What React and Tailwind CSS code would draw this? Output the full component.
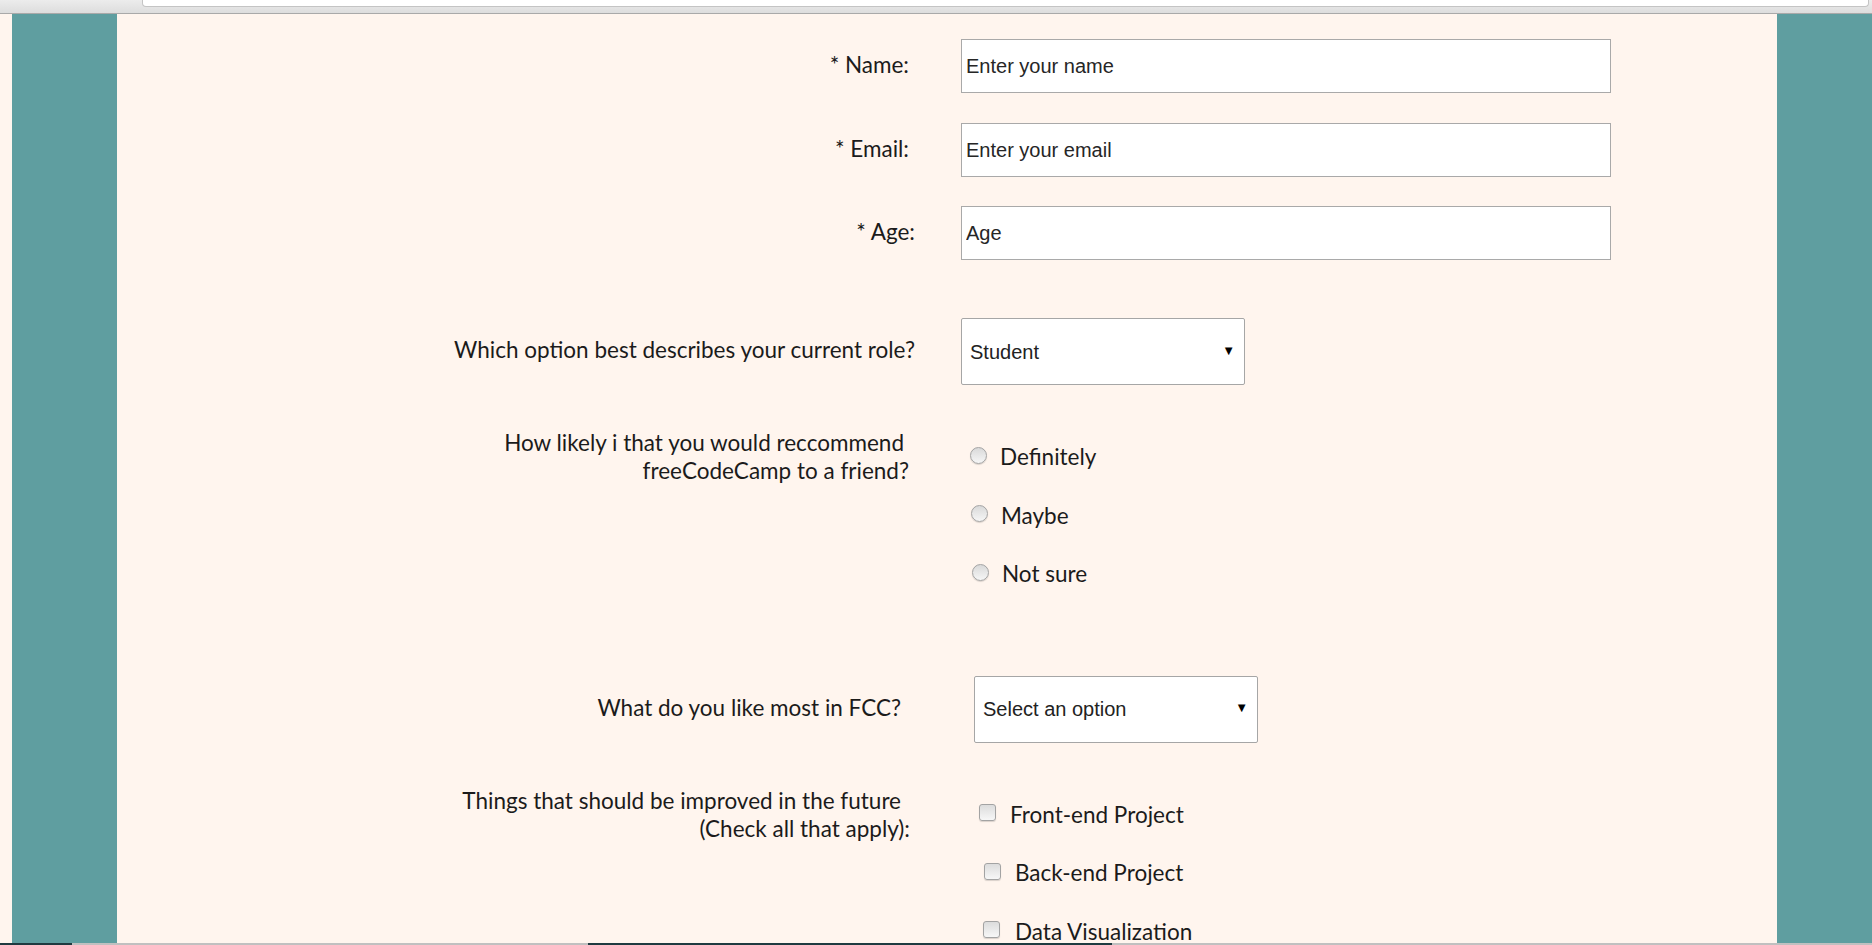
import React from 'react';

const labelFont = { fontFamily: 'Lato, "Open Sans", sans-serif' };

function TextRow({ label, placeholder, labelW = 'w-[792px]', gap = 'ml-[52px]', className = '' }) {
  return (
    <div className={`flex items-center ${className}`}>
      <div className={`${labelW} shrink-0 text-right text-[22.5px] leading-[28px] text-[#1b1b1b] -mt-[2px]`} style={labelFont}>
        {label}
      </div>
      <input
        readOnly
        placeholder={placeholder}
        className={`${gap} h-[54px] w-[650px] border border-[#a9a9a9] bg-white px-[4px] text-[20px] text-[#222] outline-none placeholder:text-[#262626] font-['Liberation_Sans',Arial,sans-serif]`}
      />
    </div>
  );
}

function FakeSelect({ value }) {
  return (
    <div className="relative h-[67px] w-[284px] rounded-[2px] border border-[#a6a6a6] bg-white">
      <div className="flex h-full items-center pl-[8px] text-[20px] text-[#222] font-['Liberation_Sans',Arial,sans-serif]">
        {value}
      </div>
      <span className="absolute right-[9px] top-1/2 -translate-y-[60%] text-[13px] leading-none text-black">▼</span>
    </div>
  );
}

function Radio() {
  return (
    <span className="-mt-[4px] block h-[17px] w-[17px] shrink-0 rounded-full border border-[#a3a3a3] bg-[linear-gradient(#d9d9d9,#f6f6f6)] shadow-[0_1px_1px_rgba(0,0,0,0.15)]" />
  );
}

function Checkbox() {
  return (
    <span className="-mt-[4px] block h-[17px] w-[17px] shrink-0 rounded-[3px] border border-[#a3a3a3] bg-[linear-gradient(#dcdcdc,#f7f7f7)] shadow-[0_1px_1px_rgba(0,0,0,0.15)]" />
  );
}

export default function App() {
  const radios = [
    { text: 'Definitely', shift: 'ml-[9px]' },
    { text: 'Maybe', shift: 'ml-[10px]' },
    { text: 'Not sure', shift: 'ml-[11px]' },
  ];
  const checks = [
    { text: 'Front-end Project', shift: 'ml-[18px]', gap: 'ml-[14px]' },
    { text: 'Back-end Project', shift: 'ml-[23px]', gap: 'ml-[14px]' },
    { text: 'Data Visualization', shift: 'ml-[22px]', gap: 'ml-[15px]' },
  ];

  return (
    <div className="h-[945px] w-[1872px] overflow-hidden bg-[#fff5ee]">
      {/* browser chrome */}
      <div className="relative h-[14px] border-b border-[#a9a9a9] bg-[linear-gradient(#ececec,#dddddd)]">
        <div className="absolute left-[142px] right-[3px] top-0 h-[7px] rounded-b-[4px] border border-t-0 border-[#c4c4c4] bg-white" />
      </div>

      <div className="flex h-[929px]">
        <div className="w-[12px] shrink-0 bg-[#fff5ee]" />
        <div className="w-[105px] shrink-0 bg-[#5f9ea0]" />

        <main className="flex w-[1660px] shrink-0 flex-col bg-[#fff5ee] pt-[25px]">
          <TextRow label="* Name:" placeholder="Enter your name" />
          <TextRow label="* Email:" placeholder="Enter your email" className="mt-[30px]" />
          <TextRow label="* Age:" placeholder="Age" labelW="w-[798px]" gap="ml-[46px]" className="mt-[29px]" />

          <div className="mt-[58px] flex items-center">
            <div className="-mt-[3px] w-[798px] shrink-0 text-right text-[22.5px] leading-[28px] text-[#1b1b1b]" style={labelFont}>
              Which option best describes your current role?
            </div>
            <div className="ml-[46px]">
              <FakeSelect value="Student" />
            </div>
          </div>

          <div className="mt-[43px] flex items-start">
            <div className="mt-[1px] w-[792px] shrink-0 text-right text-[22.5px] leading-[28px] text-[#1b1b1b]" style={labelFont}>
              <div className="mr-[5px]">How likely i that you would reccommend</div>
              <div>freeCodeCamp to a friend?</div>
            </div>
            <div className="ml-[52px] flex flex-col">
              {radios.map((r) => (
                <div key={r.text} className={`flex h-[58.5px] items-center ${r.shift}`}>
                  <Radio />
                  <span className="ml-[13px] text-[22.5px] leading-[28px] text-[#1b1b1b]" style={labelFont}>
                    {r.text}
                  </span>
                </div>
              ))}
            </div>
          </div>

          <div className="mt-[72px] flex items-center">
            <div className="-mt-[3px] w-[784px] shrink-0 text-right text-[22.5px] leading-[28px] text-[#1b1b1b]" style={labelFont}>
              What do you like most in FCC?
            </div>
            <div className="ml-[73px]">
              <FakeSelect value="Select an option" />
            </div>
          </div>

          <div className="mt-[43px] flex items-start">
            <div className="mt-[1px] w-[793px] shrink-0 text-right text-[22.5px] leading-[28px] text-[#1b1b1b]" style={labelFont}>
              <div className="mr-[9px]">Things that should be improved in the future</div>
              <div>(Check all that apply):</div>
            </div>
            <div className="ml-[51px] flex flex-col">
              {checks.map((c) => (
                <div key={c.text} className={`flex h-[58.5px] items-center ${c.shift}`}>
                  <Checkbox />
                  <span className={`${c.gap} -ml-[1px] text-[22.5px] leading-[28px] text-[#1b1b1b]`} style={labelFont}>
                    {c.text}
                  </span>
                </div>
              ))}
            </div>
          </div>
        </main>

        <div className="flex-1 bg-[#5f9ea0]" />
      </div>

      {/* bottom strip */}
      <div className="flex h-[2px]">
        <div className="w-[72px] bg-[#1f3a40]" />
        <div className="w-[516px] bg-[#c0c0c0]" />
        <div className="w-[524px] bg-[#1f3a40]" />
        <div className="flex-1 bg-[#c0c0c0]" />
      </div>
    </div>
  );
}
